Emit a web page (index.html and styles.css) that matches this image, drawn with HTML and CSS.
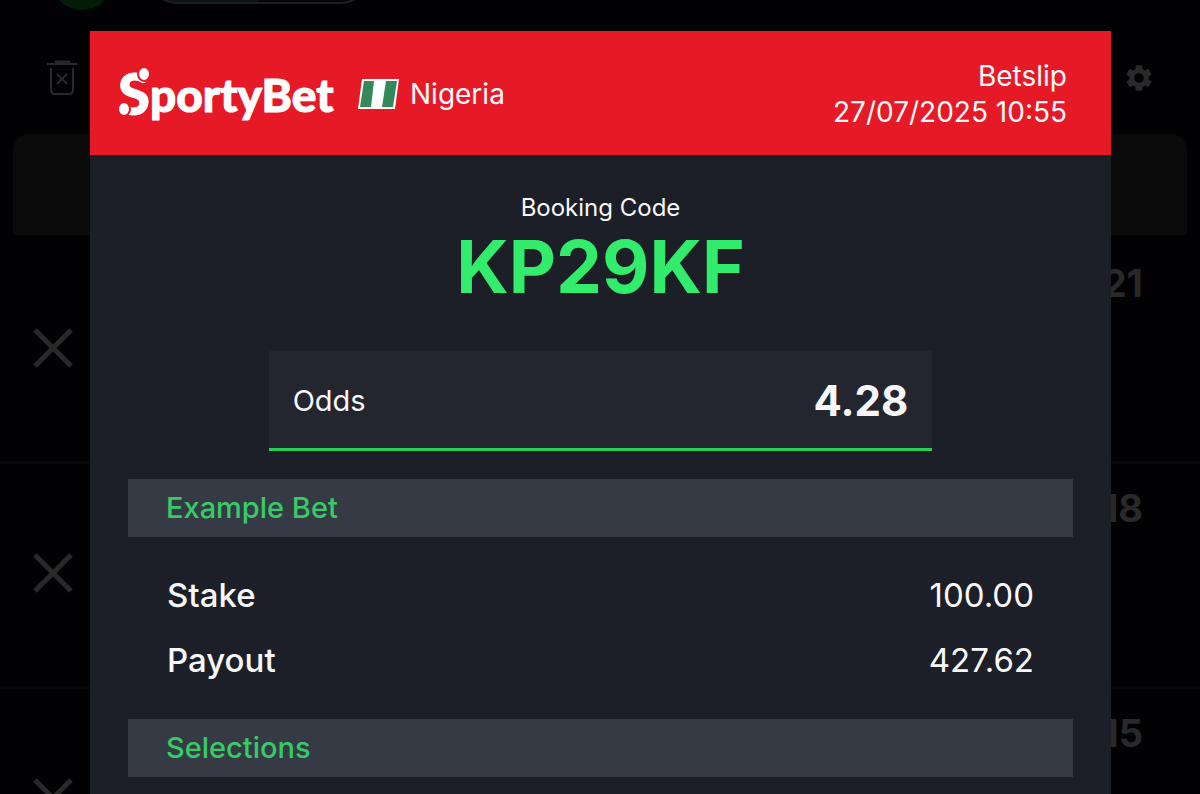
FILE: index.html
```html
<!DOCTYPE html>
<html lang="en">
<head>
    <meta charset="UTF-8">
    <meta name="viewport" content="width=device-width, initial-scale=1.0">
    <title>Betslip</title>
    <link rel="stylesheet" href="styles.css">
</head>
<body>
    <!-- Page behind the popup -->
    <div class="page">
        <div class="tabs">
            <span class="count"></span>
            <span class="switch"></span>
        </div>
        <div class="toolbar">
            <button class="icon-btn" aria-label="Remove all">
                <svg width="30" height="36" viewBox="0 0 30 36" fill="none" stroke="currentColor" stroke-width="2">
                    <path d="M0 4H30" />
                    <path d="M8 2H23" stroke-width="3" />
                    <path d="M4 8V30Q4 34 8 34H22Q26 34 26 30V8" />
                    <path d="M10 14L20 24M20 14L10 24" />
                </svg>
            </button>
            <button class="icon-btn" aria-label="Settings">
                <svg width="32" height="32" viewBox="0 0 24 24" fill="currentColor">
                    <path d="M19.14 12.94c.04-.3.06-.61.06-.94s-.02-.64-.07-.94l2.03-1.58a.49.49 0 0 0 .12-.61l-1.92-3.32a.49.49 0 0 0-.59-.22l-2.39.96a7 7 0 0 0-1.62-.94l-.36-2.54a.48.48 0 0 0-.48-.41h-3.84a.48.48 0 0 0-.47.41l-.36 2.54a7.4 7.4 0 0 0-1.62.94l-2.39-.96a.49.49 0 0 0-.59.22L2.74 8.87a.48.48 0 0 0 .12.61l2.03 1.58c-.05.3-.09.63-.09.94s.02.64.07.94l-2.03 1.58a.49.49 0 0 0-.12.61l1.92 3.32c.12.22.37.29.59.22l2.39-.96c.5.38 1.03.7 1.62.94l.36 2.54c.05.24.24.41.48.41h3.84c.24 0 .44-.17.47-.41l.36-2.54a7 7 0 0 0 1.62-.94l2.39.96c.22.08.47 0 .59-.22l1.92-3.32a.48.48 0 0 0-.12-.61zM12 15.6a3.6 3.6 0 1 1 0-7.2 3.6 3.6 0 0 1 0 7.2z" />
                </svg>
            </button>
        </div>
        <div class="panel"></div>
        <div class="bet">
            <button class="icon-btn" aria-label="Remove"><svg width="40" height="40" viewBox="0 0 40 40" stroke="currentColor" stroke-width="5"><path d="M2 2L38 38M38 2L2 38" /></svg></button>
            <strong>1.21</strong>
        </div>
        <div class="bet">
            <button class="icon-btn" aria-label="Remove"><svg width="40" height="40" viewBox="0 0 40 40" stroke="currentColor" stroke-width="5"><path d="M2 2L38 38M38 2L2 38" /></svg></button>
            <strong>1.18</strong>
        </div>
        <div class="bet">
            <button class="icon-btn" aria-label="Remove"><svg width="40" height="40" viewBox="0 0 40 40" stroke="currentColor" stroke-width="5"><path d="M2 2L38 38M38 2L2 38" /></svg></button>
            <strong>1.15</strong>
        </div>
    </div>

    <!-- Booking code popup -->
    <div class="popup">
        <header class="header">
            <div class="brand">
                <div class="logo">
                    <span class="big">S</span>portyBet
                    <svg class="dots" width="32" height="56" viewBox="0 0 32 56" fill="#fff" stroke="#e61a27" stroke-width="2">
                        <ellipse cx="26" cy="10" rx="6" ry="7" />
                        <ellipse cx="6" cy="45" rx="6" ry="7" />
                    </svg>
                </div>
                <svg class="flag" width="42" height="30" viewBox="0 0 42 30">
                    <path d="M4 0H41L37 30H0Z" fill="#fff" />
                    <path d="M6 2H16L13 28H2Z" fill="#34895a" />
                    <path d="M28 2H39L35 28H24Z" fill="#34895a" />
                </svg>
                <span>Nigeria</span>
            </div>
            <div class="date">
                Betslip<br>
                27/07/2025 10:55
            </div>
        </header>

        <div class="booking">
            <div class="booking-label">Booking Code</div>
            <div class="code">KP29KF</div>
        </div>

        <div class="odds">
            <span>Odds</span>
            <strong>4.28</strong>
        </div>

        <h2>Example Bet</h2>
        <div class="example">
            <div class="row"><span class="name">Stake</span><span>100.00</span></div>
            <div class="row"><span class="name">Payout</span><span>427.62</span></div>
        </div>

        <h2>Selections</h2>
    </div>
</body>
</html>
```
FILE: styles.css
```css
* {
    box-sizing: border-box;
}

body {
    margin: 0;
    height: 100vh;
    position: relative;
    overflow: hidden;
    background-color: #020204;
    color: #f8f8fa;
    font-family: Inter, "Liberation Sans", sans-serif;
}

/* Dimmed page */
.page {
    height: 100%;
    overflow: hidden;
    color: #29292a;
}

.tabs {
    display: flex;
    align-items: flex-end;
    gap: 32px;
    height: 12px;
    padding-left: 50px;
}

.count {
    width: 64px;
    height: 64px;
    margin-bottom: 2px;
    border-radius: 50%;
    background-color: #021c07;
}

.switch {
    width: 226px;
    height: 64px;
    margin-bottom: 8px;
    border: 2px solid #1c1f20;
    border-radius: 32px;
    background: linear-gradient(90deg, #09150f 50%, #070709 50%);
}

.toolbar {
    display: flex;
    justify-content: space-between;
    align-items: center;
    height: 122px;
    padding: 10px 45px 0 47px;
}

.icon-btn {
    display: flex;
    padding: 0;
    border: none;
    background: none;
    color: inherit;
}

.panel {
    height: 101px;
    margin: 0 13px;
    border-radius: 16px 16px 0 0;
    background-color: #0b0b0c;
}

.bet {
    display: flex;
    justify-content: space-between;
    align-items: flex-start;
    height: 225px;
    margin-top: 4px;
    padding: 24px 57px 0 33px;
    border-bottom: 3px solid #070708;
}

.bet + .bet {
    margin-top: 0;
}

.bet .icon-btn {
    margin-top: 65px;
}

.bet strong {
    font-size: 38px;
    line-height: 40px;
}

/* Popup */
.popup {
    position: absolute;
    top: 31px;
    left: 90px;
    right: 89px;
    bottom: 0;
    overflow: hidden;
    background-color: #1c1f27;
}

.header {
    display: flex;
    justify-content: space-between;
    align-items: center;
    height: 124px;
    padding: 2px 44px 0 28px;
    background-color: #e61a27;
    font-size: 28px;
}

.brand {
    display: flex;
    align-items: center;
}

.logo {
    position: relative;
    width: 240px;
    height: 60px;
    color: #fff;
    font-family: Lato, sans-serif;
    font-size: 46px;
    font-weight: 900;
    line-height: 56px;
    -webkit-text-stroke: 1px #fff;
}

.logo .big {
    font-size: 58px;
    line-height: 1;
    vertical-align: -3px;
}

/* Balls at both ends of the S */
.dots {
    position: absolute;
    top: 0;
    left: 0;
}

.flag {
    margin-right: 10px;
}

.date {
    line-height: 36px;
    text-align: right;
}

.booking {
    padding-top: 36px;
    text-align: center;
}

.booking-label {
    font-size: 24px;
    line-height: 34px;
}

.code {
    color: #32ec6b;
    font-size: 73px;
    font-weight: 700;
    line-height: 84px;
}

.odds {
    display: flex;
    justify-content: space-between;
    align-items: center;
    width: 65%;
    height: 100px;
    margin: 42px auto 28px;
    padding: 2px 24px 0;
    border-bottom: 3px solid #24cf58;
    background-color: #23262e;
    font-size: 29px;
}

.odds strong {
    font-size: 42px;
}

h2 {
    margin: 0 38px;
    padding: 0 38px;
    background-color: #363a44;
    color: #36cb68;
    font-size: 29px;
    font-weight: 500;
    line-height: 58px;
}

.example {
    padding: 26px 77px;
}

.row {
    display: flex;
    justify-content: space-between;
    font-size: 33px;
    line-height: 65px;
}

.name {
    font-weight: 500;
}
```
